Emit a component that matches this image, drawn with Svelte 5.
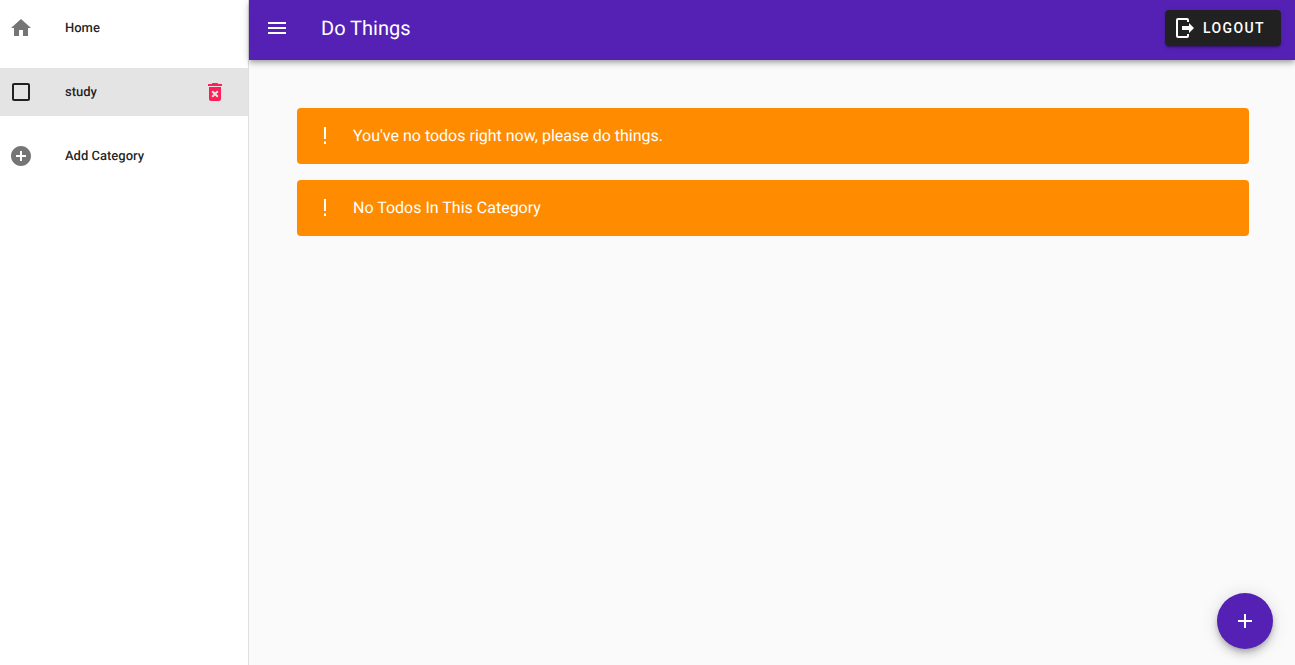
<script>
  const alerts = ["You've no todos right now, please do things.", 'No Todos In This Category'];
</script>

<div class="layout">
  <nav class="drawer">
    <div class="item home">
      <svg class="icon grey" viewBox="0 0 24 24"><path d="M10 20v-6h4v6h5v-8h3L12 3 2 12h3v8z" /></svg>
      <span class="label">Home</span>
    </div>
    <div class="item selected">
      <svg class="icon dark" viewBox="0 0 24 24"><path d="M19 5v14H5V5h14m0-2H5c-1.1 0-2 .9-2 2v14c0 1.1.9 2 2 2h14c1.1 0 2-.9 2-2V5c0-1.1-.9-2-2-2z" /></svg>
      <span class="label">study</span>
      <svg class="icon trash" viewBox="0 0 24 24"><path d="M6 19c0 1.1.9 2 2 2h8c1.1 0 2-.9 2-2V7H6v12zm2.46-7.12l1.41-1.41L12 12.59l2.12-2.12 1.41 1.41L13.41 14l2.12 2.12-1.41 1.41L12 15.41l-2.12 2.12-1.41-1.41L10.59 14l-2.13-2.12zM15.5 4l-1-1h-5l-1 1H5v2h14V4z" /></svg>
    </div>
    <div class="item add">
      <svg class="icon grey" viewBox="0 0 24 24"><path d="M12 2C6.48 2 2 6.48 2 12s4.48 10 10 10 10-4.48 10-10S17.52 2 12 2zm5 11h-4v4h-2v-4H7v-2h4V7h2v4h4v2z" /></svg>
      <span class="label">Add Category</span>
    </div>
  </nav>

  <div class="content">
    <header class="appbar">
      <svg class="icon menu" viewBox="0 0 24 24"><path d="M3 18h18v-2H3v2zm0-5h18v-2H3v2zm0-7v2h18V6H3z" /></svg>
      <h1>Do Things</h1>
      <button class="logout">
        <svg class="icon" viewBox="0 0 24 24"><path d="M16 17v-3H9v-4h7V7l5 5-5 5M14 2a2 2 0 0 1 2 2v2h-2V4H5v16h9v-2h2v2a2 2 0 0 1-2 2H5a2 2 0 0 1-2-2V4a2 2 0 0 1 2-2h9z" /></svg>
        Logout
      </button>
    </header>

    <main class="main">
      {#each alerts as text}
        <div class="alert">
          <svg class="bang" viewBox="0 0 4 18"><path d="M1 0h2v12H1zM1 14.500h2v2.500H1z" /></svg>
          <span>{text}</span>
        </div>
      {/each}
    </main>
  </div>

  <button class="fab" aria-label="Add">
    <svg class="icon" viewBox="0 0 24 24"><path d="M19 13h-6v6h-2v-6H5v-2h6V5h2v6h6v2z" /></svg>
  </button>
</div>

<style>
  :global(body) {
    margin: 0;
    font-family: Roboto, "Liberation Sans", sans-serif;
    text-rendering: geometricPrecision;
  }

  .layout {
    display: flex;
    height: 665px;
    overflow: hidden;
    background: #fafafa;
  }

  .drawer {
    flex: 0 0 248px;
    background: #fff;
    border-right: 1px solid #e0e0e0;
  }

  .item {
    display: flex;
    align-items: center;
    height: 48px;
    padding-left: 9px;
  }

  .item.home {
    height: 56px;
    margin-bottom: 12px;
  }

  .item.selected {
    background: #e4e4e4;
  }

  .item.add {
    margin-top: 16px;
  }

  .icon {
    flex: none;
    width: 24px;
    height: 24px;
    fill: currentColor;
  }

  .grey {
    color: #757575;
  }

  .dark {
    color: #212121;
  }

  .trash {
    margin-left: auto;
    margin-right: 21px;
    color: #ff1f56;
  }

  .label {
    margin-left: 32px;
    font-size: 13px;
    font-weight: 500;
    color: rgba(0, 0, 0, 0.87);
  }

  .content {
    flex: 1;
    min-width: 0;
  }

  .appbar {
    display: flex;
    align-items: center;
    height: 56px;
    padding: 0 14px 4px 16px;
    color: #fff;
    background: #5521b5;
    box-shadow: 0 2px 4px -1px rgba(0, 0, 0, 0.2), 0 4px 5px 0 rgba(0, 0, 0, 0.14), 0 1px 10px 0 rgba(0, 0, 0, 0.12);
    position: relative;
  }

  .appbar h1 {
    margin: 0 0 0 32px;
    font-size: 20px;
    font-weight: 400;
    line-height: 1.6;
  }

  .logout {
    display: flex;
    align-items: center;
    gap: 6px;
    height: 36px;
    margin-left: auto;
    padding: 0 16px 0 8px;
    border: 0;
    border-radius: 4px;
    color: #fff;
    background: #212121;
    font: 500 14px Roboto, sans-serif;
    letter-spacing: 1.4px;
    text-transform: uppercase;
    box-shadow: 0 3px 1px -2px rgba(0, 0, 0, 0.2), 0 2px 2px 0 rgba(0, 0, 0, 0.14), 0 1px 5px 0 rgba(0, 0, 0, 0.12);
  }

  .main {
    display: flex;
    flex-direction: column;
    gap: 16px;
    padding: 48px 46px 0 48px;
  }

  .alert {
    display: flex;
    align-items: center;
    height: 56px;
    padding-left: 26px;
    border-radius: 4px;
    color: #fff;
    background: #ff8c00;
    font-size: 16px;
  }

  .alert span {
    margin-left: 26px;
    margin-bottom: 1px;
  }

  .bang {
    width: 4px;
    height: 18px;
    fill: #fff;
  }

  .fab {
    position: fixed;
    right: 22px;
    bottom: 16px;
    display: flex;
    align-items: center;
    justify-content: center;
    width: 56px;
    height: 56px;
    padding: 0;
    border: 0;
    border-radius: 50%;
    color: #fff;
    background: #5521b5;
    box-shadow: 0 3px 5px -1px rgba(0, 0, 0, 0.2), 0 6px 10px 0 rgba(0, 0, 0, 0.14), 0 1px 18px 0 rgba(0, 0, 0, 0.12);
  }
</style>
